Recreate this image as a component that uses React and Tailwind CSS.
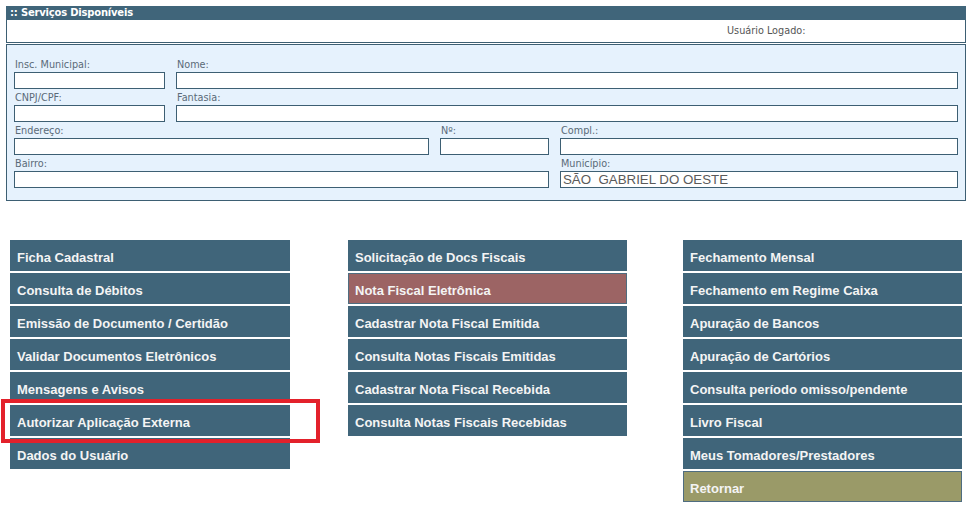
import React from "react";

const Field = ({ label, w, value }) => (
  <div className="flex flex-col" style={{ width: w }}>
    <div className="h-[16px] flex items-end pb-[2px] pl-[1px] text-[9.7px] leading-[10px] text-[#5a6a78]">{label}</div>
    <div className="h-[17px] border border-[#3d5f73] bg-white pl-[2px] text-[13.3px] leading-[15px] text-[#5a5a5a] whitespace-pre font-['Liberation_Sans',Arial,sans-serif]">
      {value || ""}
    </div>
  </div>
);

const Btn = ({ children, variant }) => {
  let cls = "bg-[#40657a] pl-[7px] pt-[4px]";
  if (variant === "red") cls = "bg-[#9c6464] border border-[#4f6d80] pl-[6px] pt-[3px]";
  if (variant === "olive") cls = "bg-[#9a9a68] border border-[#4f6d80] pl-[6px] pt-[3px]";
  return (
    <div className={`h-[31px] ${cls} leading-[27px] text-[13px] font-bold text-[#f4f4f4] font-['Liberation_Sans',Arial,sans-serif] whitespace-nowrap`}>
      {children}
    </div>
  );
};

export default function App() {
  const col1 = [
    "Ficha Cadastral",
    "Consulta de Débitos",
    "Emissão de Documento / Certidão",
    "Validar Documentos Eletrônicos",
    "Mensagens e Avisos",
    "Autorizar Aplicação Externa",
    "Dados do Usuário",
  ];
  const col2 = [
    ["Solicitação de Docs Fiscais"],
    ["Nota Fiscal Eletrônica", "red"],
    ["Cadastrar Nota Fiscal Emitida"],
    ["Consulta Notas Fiscais Emitidas"],
    ["Cadastrar Nota Fiscal Recebida"],
    ["Consulta Notas Fiscais Recebidas"],
  ];
  const col3 = [
    ["Fechamento Mensal"],
    ["Fechamento em Regime Caixa"],
    ["Apuração de Bancos"],
    ["Apuração de Cartórios"],
    ["Consulta período omisso/pendente"],
    ["Livro Fiscal"],
    ["Meus Tomadores/Prestadores"],
    ["Retornar", "olive"],
  ];
  return (
    <div className="relative w-[974px] h-[513px] bg-white overflow-hidden font-['DejaVu_Sans',Verdana,sans-serif]">
      <div className="pt-[6px] pl-[6px] w-[966px]">
        <div className="h-[14px] bg-[#40657a] pl-[4px] text-[10px] tracking-[-0.2px] leading-[14px] font-bold text-white">
          :: Serviços Disponíveis
        </div>
        <div className="h-[23px] border-x border-b border-[#3d5f73] flex items-center pl-[720px] text-[9.7px] text-[#555]">
          Usuário Logado:
        </div>
        <div className="mt-[1px] h-[157px] border border-[#3d5f73] bg-[#e6f2fd] px-[7px] pt-[11px] flex flex-col">
          <div className="flex gap-[11px]">
            <Field label="Insc. Municipal:" w={151} />
            <Field label="Nome:" w={782} />
          </div>
          <div className="flex gap-[11px]">
            <Field label="CNPJ/CPF:" w={151} />
            <Field label="Fantasia:" w={782} />
          </div>
          <div className="flex gap-[11px]">
            <Field label="Endereço:" w={415} />
            <Field label="Nº:" w={109} />
            <Field label="Compl.:" w={398} />
          </div>
          <div className="flex gap-[11px]">
            <Field label="Bairro:" w={535} />
            <Field label="Município:" w={398} value="SÃO  GABRIEL DO OESTE" />
          </div>
        </div>
      </div>

      <div className="flex pl-[10px] mt-[39px]">
        <div className="w-[280px] flex flex-col gap-[2px]">
          {col1.map((t) => (
            <Btn key={t}>{t}</Btn>
          ))}
        </div>
        <div className="w-[279px] ml-[58px] flex flex-col gap-[2px]">
          {col2.map(([t, v]) => (
            <Btn key={t} variant={v}>{t}</Btn>
          ))}
        </div>
        <div className="w-[279px] ml-[56px] flex flex-col gap-[2px]">
          {col3.map(([t, v]) => (
            <Btn key={t} variant={v}>{t}</Btn>
          ))}
        </div>
      </div>

      <div className="absolute left-[1px] top-[399px] w-[319px] h-[44px] border-[4px] border-[#e3212b] pointer-events-none" />
    </div>
  );
}
